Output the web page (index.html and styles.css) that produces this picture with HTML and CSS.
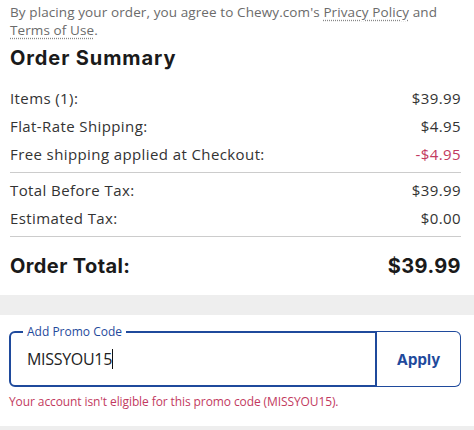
FILE: index.html
```html
<!DOCTYPE html>
<html>
<head>
<meta charset="utf-8">
<link rel="stylesheet" href="styles.css">
</head>
<body>
<div class="summary">
  <p class="legal">By placing your order, you agree to Chewy.com's <a class="link" href="#">Privacy Policy</a> and <a class="link" href="#">Terms of Use</a>.</p>
  <h2 class="title">Order Summary</h2>
  <div class="rows">
    <div class="row"><span>Items (1):</span><span>$39.99</span></div>
    <div class="row"><span>Flat-Rate Shipping:</span><span>$4.95</span></div>
    <div class="row"><span>Free shipping applied at Checkout:</span><span class="neg">-$4.95</span></div>
  </div>
  <div class="rows bordered">
    <div class="row"><span>Total Before Tax:</span><span>$39.99</span></div>
    <div class="row"><span>Estimated Tax:</span><span>$0.00</span></div>
  </div>
  <div class="total"><span>Order Total:</span><span>$39.99</span></div>
</div>
<div class="band"></div>
<div class="promo">
  <div class="promo-field">
    <div class="input">
      <span class="legend">Add Promo Code</span>
      <span class="value">MISSYOU15</span><span class="caret"></span>
    </div>
    <button class="apply">Apply</button>
  </div>
  <p class="error">Your account isn't eligible for this promo code (MISSYOU15).</p>
</div>
<div class="band bottom"></div>
</body>
</html>
```
FILE: styles.css
```css
* { box-sizing: border-box; }
body {
  margin: 0;
  background: #fff;
  font-family: "Open Sans", "Noto Sans", sans-serif;
  color: #333;
}
.summary {
  padding: 3px 13px 15px 10px;
}
.legal {
  margin: 0;
  font-size: 13.5px;
  line-height: 18px;
  letter-spacing: 0.1px;
  color: #6b6b6b;
}
.link {
  color: #6b6b6b;
  text-decoration: underline dotted #888;
  text-underline-offset: 3px;
}
.title {
  margin: 7px 0 14px;
  font-family: "Inter", sans-serif;
  font-weight: 700;
  font-size: 20px;
  line-height: 24px;
  letter-spacing: 0.9px;
  color: #1a1a1a;
}
.rows {
  padding-bottom: 4px;
}
.rows.bordered {
  border-top: 1px solid #ccc;
  padding-top: 3px;
  padding-bottom: 4px;
  border-bottom: 1px solid #ccc;
}
.row {
  display: flex;
  justify-content: space-between;
  font-size: 15px;
  line-height: 28px;
  letter-spacing: 0.4px;
  color: #333;
}
.neg { color: #c23a60; }
.total {
  display: flex;
  justify-content: space-between;
  margin-top: 15px;
  font-family: "Inter", sans-serif;
  font-weight: 700;
  font-size: 20px;
  line-height: 28px;
  letter-spacing: 0.4px;
  color: #1a1a1a;
}
.band {
  height: 20px;
  background: #eeeeee;
}
.band.bottom { height: 8px; }
.promo {
  padding: 16px 13px 16px 9px;
}
.promo-field {
  display: flex;
  height: 56px;
}
.input {
  position: relative;
  flex: 1;
  display: flex;
  align-items: center;
  padding-left: 16px;
  border: 2px solid #1f4a9c;
  border-radius: 6px 0 0 6px;
}
.legend {
  position: absolute;
  top: -9px;
  left: 12px;
  padding: 0 4px;
  background: #fff;
  font-size: 12px;
  line-height: 16px;
  color: #1f4a9c;
}
.value {
  font-size: 16px;
  letter-spacing: -0.3px;
  color: #222;
}
.caret {
  display: inline-block;
  width: 1px;
  height: 20px;
  background: #111;
}
.apply {
  width: 84px;
  border: 1px solid #1f4a9c;
  border-left: none;
  border-radius: 0 6px 6px 0;
  background: #fff;
  font-family: "Inter", sans-serif;
  font-weight: 700;
  font-size: 15px;
  color: #1f4a9c;
}
.error {
  margin: 7px 0 0;
  font-size: 12px;
  line-height: 16px;
  letter-spacing: -0.1px;
  color: #c23a60;
}
```
